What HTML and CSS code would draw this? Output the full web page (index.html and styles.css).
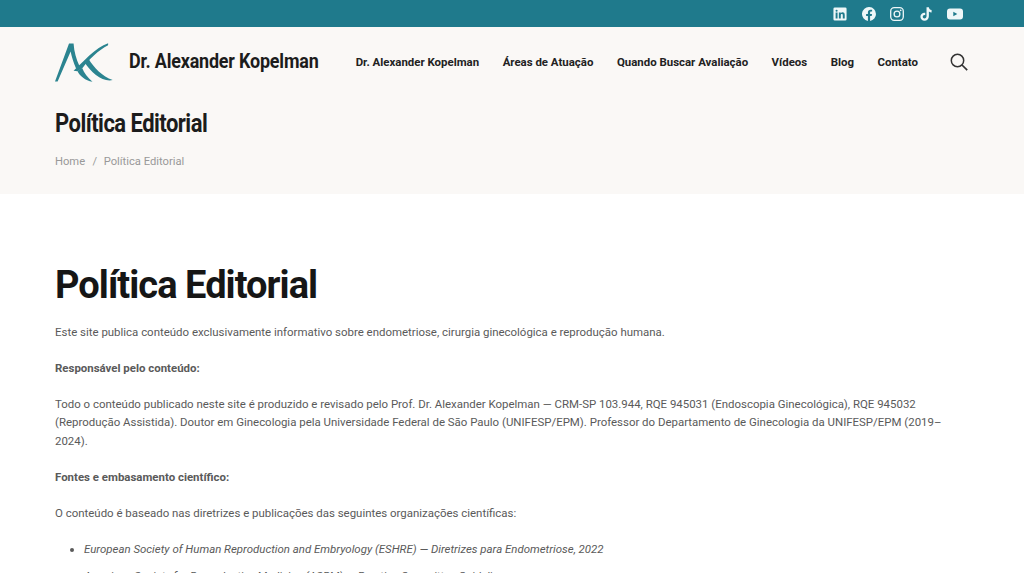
FILE: index.html
```html
<!DOCTYPE html>
<html lang="pt-BR">
<head>
    <meta charset="UTF-8">
    <meta name="viewport" content="width=device-width, initial-scale=1.0">
    <title>Política Editorial</title>
    <link rel="stylesheet" href="styles.css">
</head>
<body>
    <div class="topbar">
        <div class="social">
            <svg viewBox="0 0 16 16" class="icon"><path fill="currentColor" fill-rule="evenodd" d="M2 .5h12a1.500 1.500 0 0 1 1.500 1.500v12a1.500 1.500 0 0 1-1.500 1.500H2A1.500 1.500 0 0 1 .5 14V2A1.500 1.500 0 0 1 2 .5zM3 6.300v6.700h2.200V6.300zM4.100 3a1.200 1.200 0 1 0 0 2.400 1.200 1.200 0 0 0 0-2.400zM6.700 6.300V13h2.200V9.500c0-1 .5-1.500 1.200-1.500s1.100.5 1.100 1.500V13h2.200V9c0-2-1-2.900-2.500-2.900-.9 0-1.600.4-2 1v-.8z"/></svg>
            <svg viewBox="0 0 16 16" class="icon"><path fill="currentColor" d="M16 8a8 8 0 1 0-9.250 7.900v-5.600H4.700V8h2.050V6.200c0-2 1.200-3.100 3-3.100.87 0 1.800.16 1.800.16v2h-1c-1 0-1.300.6-1.300 1.250V8h2.200l-.35 2.300H9.250v5.600A8 8 0 0 0 16 8z"/></svg>
            <svg viewBox="0 0 16 16" class="icon"><rect x=".8" y=".8" width="14.400" height="14.400" rx="4" fill="none" stroke="currentColor" stroke-width="1.500"/><circle cx="8" cy="8" r="3.300" fill="none" stroke="currentColor" stroke-width="1.500"/><circle cx="12.200" cy="3.800" r="1" fill="currentColor"/></svg>
            <svg viewBox="0 0 16 16" class="icon"><path fill="currentColor" d="M8.600.3h2.700c.2 1.800 1.300 3 3.100 3.200v2.700c-1.200 0-2.200-.4-3.100-1v5.400c0 3-2.200 5.100-5 5.100-2.700 0-4.700-2-4.700-4.600 0-2.900 2.400-5 5.500-4.600v2.800c-1.600-.4-2.800.5-2.800 1.800 0 1.100.9 2 2 2 1.300 0 2.300-1 2.300-2.700z"/></svg>
            <svg viewBox="0 0 16 16" class="icon icon-yt"><path fill="currentColor" fill-rule="evenodd" d="M3 2.500h10a3 3 0 0 1 3 3v5a3 3 0 0 1-3 3H3a3 3 0 0 1-3-3v-5a3 3 0 0 1 3-3zM6.300 5.700v4.600L10.300 8z"/></svg>
        </div>
    </div>

    <header class="site-header">
        <div class="brand">
            <svg class="logo" viewBox="15 13 178 118">
                <path fill="#2b8490" d="M15 130 L58 14 L72 14 C74 40 80 62 90 83 L80 91 C72 72 66 54 63 38 L23 130 Z"/>
                <path fill="#2b8490" d="M72 97 C100 72 140 25 178 13 L178 19 C148 34 120 62 100 88 L84 99 Z"/>
                <path fill="#2b8490" d="M104 69 L117 59 C135 90 160 114 192 126 C160 132 128 106 104 69 Z"/>
                <path fill="#2b8490" d="M84 98 L98 88 C105 105 115 118 130 131 C108 127 91 114 84 98 Z"/>
            </svg>
            <span class="brand-name">Dr. Alexander Kopelman</span>
        </div>
        <nav class="main-nav">
            <a href="#">Dr. Alexander Kopelman</a>
            <a href="#">Áreas de Atuação</a>
            <a href="#">Quando Buscar Avaliação</a>
            <a href="#">Vídeos</a>
            <a href="#">Blog</a>
            <a href="#">Contato</a>
        </nav>
        <svg class="search" viewBox="0 0 18 18"><circle cx="7.500" cy="7.500" r="6.200" fill="none" stroke="currentColor" stroke-width="1.500"/><path d="M12 12l5.200 5.200" stroke="currentColor" stroke-width="1.700" fill="none"/></svg>
    </header>

    <section class="page-title">
        <h2>Política Editorial</h2>
        <p class="crumbs"><a href="#">Home</a><span class="sep">/</span><span>Política Editorial</span></p>
    </section>

    <main class="content">
        <h1>Política Editorial</h1>
        <p>Este site publica conteúdo exclusivamente informativo sobre endometriose, cirurgia ginecológica e reprodução humana.</p>
        <p><strong>Responsável pelo conteúdo:</strong></p>
        <p>Todo o conteúdo publicado neste site é produzido e revisado pelo Prof. Dr. Alexander Kopelman — CRM-SP 103.944, RQE 945031 (Endoscopia Ginecológica), RQE 945032 (Reprodução Assistida). Doutor em Ginecologia pela Universidade Federal de São Paulo (UNIFESP/EPM). Professor do Departamento de Ginecologia da UNIFESP/EPM (2019–2024).</p>
        <p><strong>Fontes e embasamento científico:</strong></p>
        <p>O conteúdo é baseado nas diretrizes e publicações das seguintes organizações científicas:</p>
        <ul>
            <li><em>European Society of Human Reproduction and Embryology (ESHRE) — Diretrizes para Endometriose, 2022</em></li>
            <li><em>American Society for Reproductive Medicine (ASRM) — Practice Committee Guidelines</em></li>
        </ul>
    </main>
</body>
</html>
```

FILE: styles.css
```css
* {
    margin: 0;
    padding: 0;
    box-sizing: border-box;
}

html, body {
    height: 573px;
    overflow: hidden;
}

body {
    background: #fff;
    font-family: Roboto, "Liberation Sans", sans-serif;
    color: #5a5a5a;
}

a {
    color: inherit;
    text-decoration: none;
}

.topbar {
    height: 27px;
    background: #1f7a8c;
    display: flex;
    justify-content: flex-end;
    align-items: center;
    padding-right: 61px;
}

.social {
    display: flex;
    align-items: center;
    gap: 14.5px;
    color: #eef7f8;
}

.icon {
    width: 14px;
    height: 14px;
    display: block;
}

.icon-yt {
    width: 16px;
    height: 16px;
}

.site-header {
    height: 70px;
    background: #faf8f6;
    display: flex;
    align-items: center;
    padding: 0 56px 0 55px;
}

.brand {
    display: flex;
    align-items: center;
    gap: 16px;
    flex: none;
    width: 263px;
}

.logo {
    width: 58px;
    height: 39px;
    display: block;
    flex: none;
}

.brand-name {
    font-size: 19.5px;
    line-height: 22px;
    font-weight: 700;
    color: #1c1c1c;
    white-space: nowrap;
    letter-spacing: -0.2px;
    transform: scaleX(0.92);
    transform-origin: left center;
}

.main-nav {
    margin-left: auto;
    display: flex;
    gap: 23.5px;
    font-size: 11.45px;
    font-weight: 700;
    color: #222;
    white-space: nowrap;
}

.search {
    width: 18px;
    height: 18px;
    margin-left: 32px;
    color: #333;
    flex: none;
}

.page-title {
    height: 97px;
    background: #faf8f6;
    padding: 0 55px;
}

.page-title h2 {
    font-size: 25px;
    line-height: 30px;
    font-weight: 700;
    letter-spacing: -0.6px;
    color: #1c1c1c;
    padding-top: 12px;
    box-sizing: content-box;
    transform: scaleX(0.88);
    transform-origin: left top;
}

.crumbs {
    margin-top: 15px;
    font-size: 11.2px;
    line-height: 16px;
    color: #999;
}

.sep {
    margin: 0 6.5px 0 7.5px;
}

.content {
    padding: 68px 55px 0;
    font-size: 11.44px;
    line-height: 18.3px;
}

.content h1 {
    font-size: 38px;
    line-height: 46px;
    font-weight: 700;
    letter-spacing: -0.95px;
    color: #161616;
    margin-bottom: 15px;
}

.content p {
    margin-bottom: 17.7px;
}

.content ul {
    margin-left: 29px;
}

.content li {
    margin-bottom: 9px;
}
```
